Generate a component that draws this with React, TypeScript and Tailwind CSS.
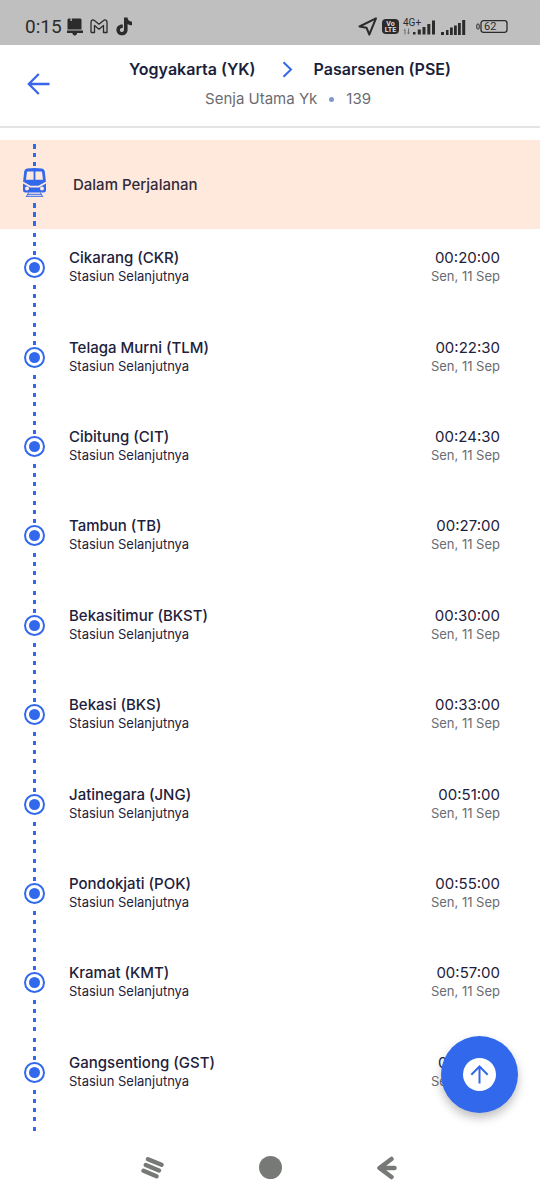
import React from "react";

type Stop = { name: string; time: string };

const stops: Stop[] = [
  { name: "Cikarang (CKR)", time: "00:20:00" },
  { name: "Telaga Murni (TLM)", time: "00:22:30" },
  { name: "Cibitung (CIT)", time: "00:24:30" },
  { name: "Tambun (TB)", time: "00:27:00" },
  { name: "Bekasitimur (BKST)", time: "00:30:00" },
  { name: "Bekasi (BKS)", time: "00:33:00" },
  { name: "Jatinegara (JNG)", time: "00:51:00" },
  { name: "Pondokjati (POK)", time: "00:55:00" },
  { name: "Kramat (KMT)", time: "00:57:00" },
  { name: "Gangsentiong (GST)", time: "01:00:00" },
];

function StatusBar() {
  return (
    <div className="flex h-[45px] items-center bg-[#bfbfbf] pt-2 pr-8 pl-[25px] text-[#2b2b2b]">
      <span className="text-[19px] leading-6">0:15</span>
      <svg className="ml-1" width="18" height="18" viewBox="0 0 18 18" fill="currentColor" aria-hidden="true">
        <path d="M2.500.5H4.500V3H5.800V.5H14.500L15.500 1.500V11.500H1.500V1.500z" />
        <path d="M1 12.500H17V15H11V16L9.500 17.500H8L6.500 16V15H1z" />
      </svg>
      <svg className="ml-[6px]" width="18" height="15" viewBox="0 0 18 15" fill="none" stroke="currentColor" strokeWidth="1.300" strokeLinejoin="round" aria-hidden="true">
        <path d="M1 13V3C1 1 3 .4 4.400 1.500L9 5.200 13.600 1.500C15 .4 17 1 17 3V13.500H13.500V6.500L9 10.200 4.500 6.500V13.500H1.500Q1 13.500 1 13z" />
      </svg>
      <svg className="ml-2" width="17" height="19" viewBox="0 0 17 19" fill="currentColor" aria-hidden="true">
        <path d="M8 .5h3.500c.3 2.500 1.700 4 4.500 4.300v3.500c-1.700 0-3.200-.5-4.400-1.300v5.700c0 3.400-2.500 5.600-5.600 5.600S.4 15.900.4 12.900c0-3.300 2.800-5.800 6.400-5.400v3.500c-1.700-.4-2.900.5-2.900 1.900 0 1.300 1 2.100 2.100 2.100 1.400 0 2-1 2-2.500z" />
      </svg>
      <div className="ml-auto flex items-center">
        <svg width="20" height="19" viewBox="0 0 20 19" fill="none" stroke="currentColor" strokeWidth="2" strokeLinejoin="round" aria-hidden="true">
          <path d="M18 1.300 1.500 9.500l7 1.200 2.800 6.800z" />
        </svg>
        <span className="ml-1 flex h-[15px] w-[17px] flex-col items-center justify-center rounded-sm bg-[#2b2b2b] text-[7px] leading-[6px] font-bold text-[#dddddd]">
          <span>Vo</span>
          <span>LTE</span>
        </span>
        <svg className="ml-1" width="33" height="17" viewBox="0 0 33 17" fill="currentColor" aria-hidden="true">
          <text x="0" y="8" fontSize="10" fontFamily="Roboto, sans-serif">4G+</text>
          <path d="M2 10.500 .5 12.500h1v4h1v-4zM5.500 16.500l1.500-2H6v-4H5v4H4z" opacity=".55" />
          <rect x="10" y="14" width="2.500" height="2.500" />
          <rect x="14.800" y="11.500" width="3" height="5" />
          <rect x="19.500" y="9" width="3" height="7.500" />
          <rect x="24.300" y="6" width="3" height="10.500" />
          <rect x="29" y="2.500" width="3" height="14" />
        </svg>
        <svg className="ml-[5px]" width="25" height="17" viewBox="0 0 25 17" fill="currentColor" aria-hidden="true">
          <rect x="0" y="14" width="3" height="3" />
          <rect x="5" y="12" width="2.500" height="5" />
          <rect x="9" y="9.500" width="2.800" height="7.500" />
          <rect x="13" y="7.500" width="2.800" height="9.500" />
          <rect x="17" y="5" width="2.800" height="12" />
          <rect x="21.200" y="2" width="3" height="15" />
        </svg>
        <svg className="ml-[10px]" width="32" height="13" viewBox="0 0 32 13" fill="none" stroke="currentColor" aria-hidden="true">
          <rect x="5" y=".7" width="26" height="11.600" rx="2.500" strokeWidth="1.300" />
          <rect x=".8" y="4" width="2.400" height="5" rx="1" />
          <text x="8" y="10.300" fontSize="11" fontFamily="Roboto, sans-serif" fill="currentColor" stroke="none">62</text>
        </svg>
      </div>
    </div>
  );
}

function TripHeader() {
  return (
    <header className="grid h-[83px] grid-cols-[60px_1fr_20px] border-b-2 border-[#e4e4e6] bg-white">
      <button type="button" aria-label="Kembali" className="flex items-center justify-end pr-[10px] pb-1 text-[#3a66e8]">
        <svg width="23" height="22" viewBox="0 0 23 22" fill="none" stroke="currentColor" strokeWidth="2.300" aria-hidden="true">
          <path d="M22.500 11H2M11.800 1 1.800 11l10 10" />
        </svg>
      </button>
      <div className="flex flex-col items-center pt-3">
        <h1 className="flex items-center text-base leading-6 font-semibold text-[#1b1f3b]">
          <span>Yogyakarta (YK)</span>
          <svg className="mr-[21px] ml-[26px]" width="11" height="17" viewBox="0 0 11 17" fill="none" stroke="#3269ec" strokeWidth="2" role="img" aria-label="ke">
            <path d="M1.500 1.200 9 8.500l-7.500 7.300" />
          </svg>
          <span>Pasarsenen (PSE)</span>
        </h1>
        <p className="mt-2 flex items-center pr-1 text-[15px] leading-5 text-[#6b6c72]">
          <span>Senja Utama Yk</span>
          <span className="mx-3 size-[5px] rounded-full bg-[#8098cb]" />
          <span>139</span>
        </p>
      </div>
    </header>
  );
}

function TrainRail() {
  return (
    <svg className="ml-[22px] shrink-0" width="25" height="89" viewBox="0 0 25 89" fill="#3269ec" aria-hidden="true">
      <path d="M11 4h3v5h-3zM11 13h3v4h-3zM11 22h3v4h-3zM11 63h3v5h-3zM11 72h3v5h-3zM11 81h3v5h-3z" />
      <path
        fillRule="evenodd"
        d="M5 28.500Q12.500 27.300 20 28.500 22.500 29 22.800 31.500L24 42.500V50Q24 52.500 21.500 52.500H3.500Q1 52.500 1 50V42.500L2.200 31.500Q2.500 29 5 28.500zM5.800 31.500Q5 31.500 4.900 32.500L4 39.800H11.600V31.500zM13.400 31.500V39.800H21L20.100 32.500Q20 31.500 19.200 31.500zM1 41.500V43.500L8 47.500H17L24 43.500V41.500L16.500 45.700H8.500zM5 46.600A2 2 0 1 0 5 50.600 2 2 0 1 0 5 46.600zM20 46.600A2 2 0 1 0 20 50.600 2 2 0 1 0 20 46.600z"
      />
      <path d="M6.800 52.500 4 57M18.200 52.500 21 57M6 54.300H19M5 56.300H20" fill="none" stroke="#3269ec" strokeWidth="1" />
    </svg>
  );
}

function StopRail() {
  return (
    <svg className="ml-[22px] shrink-0" width="25" height="89" viewBox="0 0 25 89" fill="#3269ec" aria-hidden="true">
      <path d="M11 4h3v4h-3zM11 13h3v4h-3zM11 22h3v4h-3zM11 56h3v4h-3zM11 65h3v4h-3zM11 74h3v4h-3zM11 83h3v4h-3z" />
      <circle cx="12.500" cy="38.500" r="9.500" fill="white" stroke="#3269ec" strokeWidth="2" />
      <circle cx="12.500" cy="38.500" r="5.500" />
    </svg>
  );
}

function StopRow({ name, time }: Stop) {
  return (
    <li className="flex">
      <StopRail />
      <div className="flex flex-1 justify-between pt-[19px] pr-10 pl-[22px]">
        <div>
          <h2 className="text-[15px] leading-5 font-medium text-[#1e213b]">{name}</h2>
          <p className="text-[13px] leading-4 text-[#1e213b]">Stasiun Selanjutnya</p>
        </div>
        <div className="text-right">
          <p className="text-[15px] leading-5 text-[#1e213b]">{time}</p>
          <p className="text-[13px] leading-4 text-[#6b6c72]">Sen, 11 Sep</p>
        </div>
      </div>
    </li>
  );
}

function NavigationBar() {
  return (
    <nav className="flex h-[65px] items-center justify-center gap-[94px] text-[#777977]">
      <button type="button" aria-label="Aplikasi terbaru">
        <svg width="24" height="24" viewBox="0 0 24 24" fill="none" stroke="currentColor" strokeWidth="4.400" strokeLinecap="round" aria-hidden="true">
          <path d="M7 3.200 20.500 8.800M4.800 9 18 14.500M2.500 14.800 15.500 20.300" />
        </svg>
      </button>
      <button type="button" aria-label="Beranda">
        <span className="block size-[23px] rounded-full bg-current" />
      </button>
      <button type="button" aria-label="Kembali ke layar sebelumnya">
        <svg width="24" height="24" viewBox="0 0 24 24" fill="none" stroke="currentColor" strokeWidth="4.500" strokeLinecap="round" strokeLinejoin="round" aria-hidden="true">
          <path d="M15.500 3 3.500 12l12 9M6.500 12h12" />
        </svg>
      </button>
    </nav>
  );
}

export default function App() {
  return (
    <div className="flex min-h-screen flex-col bg-white font-[Inter,sans-serif]">
      <div className="font-[Roboto,sans-serif]">
        <StatusBar />
      </div>
      <TripHeader />
      <main className="flex flex-1 flex-col pt-3">
        <ol className="grid flex-1 auto-rows-fr">
          <li className="flex bg-[#ffe9dc]">
            <TrainRail />
            <p className="pt-[35px] pl-[26px] text-[15px] leading-5 font-medium text-[#302b3b]">Dalam Perjalanan</p>
          </li>
          {stops.map((stop) => (
            <StopRow key={stop.name} name={stop.name} time={stop.time} />
          ))}
        </ol>
        <div className="flex h-3 pt-1 pl-[33px]">
          <span className="h-1 w-[3px] bg-[#3269ec]" />
        </div>
      </main>
      <NavigationBar />
      <button
        type="button"
        aria-label="Ke atas"
        className="fixed right-[22px] bottom-[87px] flex size-[77px] items-center justify-center rounded-full bg-[#3269ec] shadow-[0_5px_10px_rgba(0,0,0,0.25)]"
      >
        <span className="flex size-[33px] items-center justify-center rounded-full bg-white">
          <svg width="19" height="19" viewBox="0 0 19 19" fill="none" stroke="#3269ec" strokeWidth="2" aria-hidden="true">
            <path d="M9.500 18.500V1.500M1.300 9.700l8.200-8.200 8.200 8.200" />
          </svg>
        </span>
      </button>
    </div>
  );
}
